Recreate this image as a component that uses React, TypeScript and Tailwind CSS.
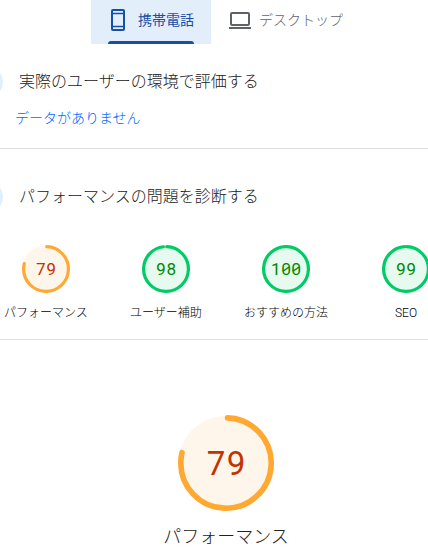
type Tone = "pass" | "average";

const tones = {
    pass: { base: "fill-[#e6faf0]", arc: "stroke-[#00cc66]", text: "text-[#080]" },
    average: { base: "fill-[#fff6eb]", arc: "stroke-[#ffa933]", text: "text-[#c33300]" },
};

const categories: { label: string; score: number; tone: Tone }[] = [
    { label: "パフォーマンス", score: 79, tone: "average" },
    { label: "ユーザー補助", score: 98, tone: "pass" },
    { label: "おすすめの方法", score: 100, tone: "pass" },
    { label: "SEO", score: 99, tone: "pass" },
];

const PhoneIcon = () => (
    <svg viewBox="0 0 20 24" className="h-6 w-5" fill="none" stroke="currentColor" strokeWidth="2" aria-hidden="true">
        <rect x="4" y="2" width="12" height="20" rx="1" />
        <path d="M4 5.5h12M4 18.5h12" strokeWidth="1.5" />
    </svg>
);

const LaptopIcon = () => (
    <svg viewBox="0 0 22 24" className="h-6 w-[22px]" fill="none" stroke="currentColor" strokeWidth="2" aria-hidden="true">
        <rect x="2" y="5" width="18" height="12" rx="1" />
        <path d="M0 20h22" />
    </svg>
);

const Gauge = ({ score, tone, size }: { score: number; tone: Tone; size: "small" | "large" }) => {
    const style = tones[tone];
    const large = size === "large";
    const stroke = large ? 7 : 8;
    const r = 60 - stroke / 2;
    const length = 2 * Math.PI * r;
    const filled = score === 100 ? length : (score / 100) * length - stroke / 2;

    return (
        <div className={`grid place-items-center ${large ? "size-24" : "size-12"}`}>
            <svg viewBox="0 0 120 120" className="col-start-1 row-start-1 size-full" aria-hidden="true">
                <circle cx="60" cy="60" r="59" className={style.base} />
                <circle
                    cx="60"
                    cy="60"
                    r={r}
                    fill="none"
                    strokeWidth={stroke}
                    strokeLinecap="round"
                    strokeDasharray={`${filled} ${length}`}
                    transform="rotate(-88 60 60)"
                    className={style.arc}
                />
            </svg>
            <span
                className={`col-start-1 row-start-1 font-['Roboto_Mono','Inter',monospace] tabular-nums slashed-zero ${style.text} ${large ? "text-[33px]" : "text-[17px]"}`}
            >
                {score}
            </span>
        </div>
    );
};

const SectionTitle = ({ children }: { children: string }) => (
    <div className="flex items-center gap-4">
        <span className="-ml-[29px] size-8 rounded-full bg-[#e1effc]"></span>
        <h2 className="text-base font-light">{children}</h2>
    </div>
);

const App = () => {
    return (
        <div className="overflow-hidden bg-white font-['Roboto','Noto_Sans_CJK_JP',sans-serif] text-[#212121]">
            <div className="-mr-6">
                <nav className="flex justify-center text-sm">
                    <button className="flex h-11 flex-col justify-between bg-[#e3eefb] px-[17px] text-[#174ea6]">
                        <span className="flex h-10 items-center gap-[10px]">
                            <PhoneIcon />
                            携帯電話
                        </span>
                        <span className="h-[3px] w-full rounded-t bg-[#174ea6]"></span>
                    </button>
                    <button className="flex h-10 items-center gap-2 px-[18px] font-light text-[#5f6368]">
                        <LaptopIcon />
                        デスクトップ
                    </button>
                </nav>

                <section className="border-b border-[#dadce0] pt-[22px] pb-[18px]">
                    <SectionTitle>実際のユーザーの環境で評価する</SectionTitle>
                    <p className="mt-2 pl-[15px] text-sm leading-6 font-light text-[#0066ff]">データがありません</p>
                </section>

                <section className="border-b border-[#e0e0e0] pt-8 pb-[14px]">
                    <SectionTitle>パフォーマンスの問題を診断する</SectionTitle>
                    <div className="mt-8 flex justify-center">
                        {categories.map(({ label, score, tone }) => (
                            <a key={label} href="#performance" className="flex w-[120px] shrink-0 flex-col items-center gap-2">
                                <Gauge score={score} tone={tone} size="small" />
                                <span className="text-xs leading-6 font-light whitespace-nowrap text-black">{label}</span>
                            </a>
                        ))}
                    </div>
                </section>

                <section id="performance" className="flex flex-col items-center gap-3 pt-[75px]">
                    <Gauge score={79} tone="average" size="large" />
                    <h3 className="text-lg leading-7 font-light">パフォーマンス</h3>
                </section>
            </div>
        </div>
    );
};

export default App;
